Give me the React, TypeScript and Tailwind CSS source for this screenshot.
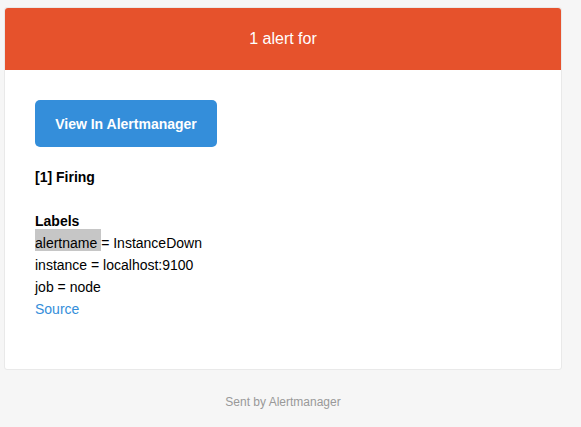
export default function App() {
  return (
    <div className="min-h-[427px] w-[581px] bg-[#f6f6f6] pt-[7px]" style={{ fontFamily: '"Liberation Sans", Arial, Helvetica, sans-serif' }}>
      <div className="ml-[4px] w-[558px] rounded-[3px] border border-[#e9e9e9] bg-white">
        <div className="flex h-[62px] items-center justify-center rounded-t-[3px] bg-[#e6522c] text-[16px] leading-[22px] text-white">
          1 alert for
        </div>
        <div className="px-[30px] pt-[30px] pb-[49px] text-[14px] leading-[22px] text-black">
          <div className="flex h-[47px] w-[182px] items-center justify-center rounded-[5px] bg-[#348eda] text-[14px] font-bold text-white">
            View In Alertmanager
          </div>
          <div className="mt-[19px] font-bold">[1] Firing</div>
          <div className="h-[22px]" />
          <div className="font-bold">Labels</div>
          <div>
            <span className="relative -top-[3px] inline-block bg-[#c6c6c6] leading-[22px]">
              <span className="relative top-[3px]">alertname&nbsp;</span>
            </span>
            = InstanceDown
          </div>
          <div>instance = localhost:9100</div>
          <div>job = node</div>
          <div className="text-[#348eda]">Source</div>
        </div>
      </div>
      <div className="ml-[4px] w-[558px] pt-[24px] text-center text-[12px] leading-[16px] text-[#999999]">
        Sent by Alertmanager
      </div>
    </div>
  );
}
